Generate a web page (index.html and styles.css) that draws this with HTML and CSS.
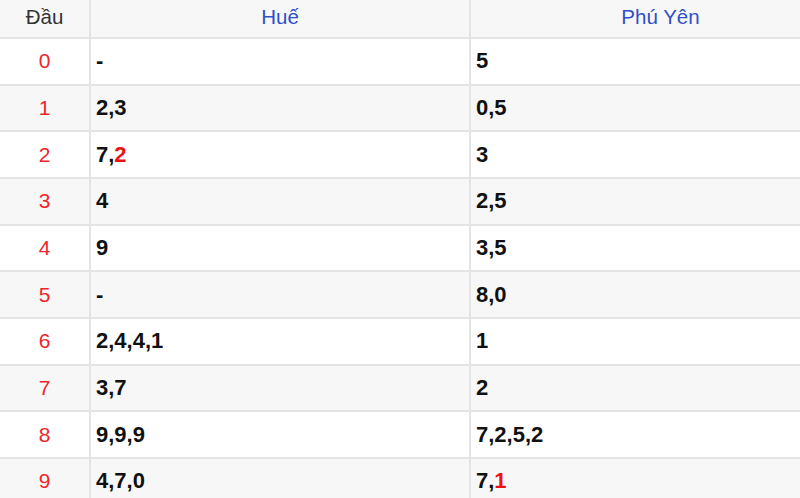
FILE: index.html
```html
<!DOCTYPE html>
<html lang="vi">
<head>
<meta charset="utf-8">
<link rel="stylesheet" href="styles.css">
</head>
<body>
<div class="frame">
<table class="loto">
  <colgroup><col class="c-dau"><col class="c-a"><col class="c-b"></colgroup>
  <thead>
    <tr><th class="dau-h">Đầu</th><th class="prov">Huế</th><th class="prov">Phú Yên</th></tr>
  </thead>
  <tbody>
    <tr><td class="dau">0</td><td class="val">-</td><td class="val">5</td></tr>
    <tr><td class="dau">1</td><td class="val">2,3</td><td class="val">0,5</td></tr>
    <tr><td class="dau">2</td><td class="val">7,<span class="hit">2</span></td><td class="val">3</td></tr>
    <tr><td class="dau">3</td><td class="val">4</td><td class="val">2,5</td></tr>
    <tr><td class="dau">4</td><td class="val">9</td><td class="val">3,5</td></tr>
    <tr><td class="dau">5</td><td class="val">-</td><td class="val">8,0</td></tr>
    <tr><td class="dau">6</td><td class="val">2,4,4,1</td><td class="val">1</td></tr>
    <tr><td class="dau">7</td><td class="val">3,7</td><td class="val">2</td></tr>
    <tr><td class="dau">8</td><td class="val">9,9,9</td><td class="val">7,2,5,2</td></tr>
    <tr><td class="dau">9</td><td class="val">4,7,0</td><td class="val">7,<span class="hit">1</span></td></tr>
  </tbody>
</table>
</div>
</body>
</html>
```
FILE: styles.css
```css
html, body {
  margin: 0;
  padding: 0;
  background: #ffffff;
  overflow: hidden;
}
.frame {
  width: 800px;
  height: 498px;
  overflow: hidden;
}
.loto {
  width: 850px;
  border-collapse: collapse;
  table-layout: fixed;
  font-family: "Liberation Sans", Arial, sans-serif;
  font-size: 21px;
}
.c-dau { width: 90px; }
.c-a { width: 380px; }
.c-b { width: 380px; }
.loto th, .loto td {
  border: 2px solid #e4e4e4;
  padding: 0 5px;
}
.loto tr > :first-child { border-left: none; }
.loto tr > :last-child { border-right: none; }
.loto thead th {
  border-top: none;
  height: 33px;
  background: #f7f7f7;
  font-weight: normal;
  font-size: 20.5px;
  text-align: center;
  padding-bottom: 4px;
}
.dau-h { color: #333333; }
.prov { color: #2f50c8; }
.loto tbody td { height: 44.67px; }
.loto tbody tr:nth-child(odd) { background: #ffffff; }
.loto tbody tr:nth-child(even) { background: #f7f7f7; }
.dau {
  text-align: center;
  color: #f0252b;
}
.val {
  font-weight: bold;
  font-size: 22px;
  color: #111111;
}
.hit { color: #ee1111; }
```
